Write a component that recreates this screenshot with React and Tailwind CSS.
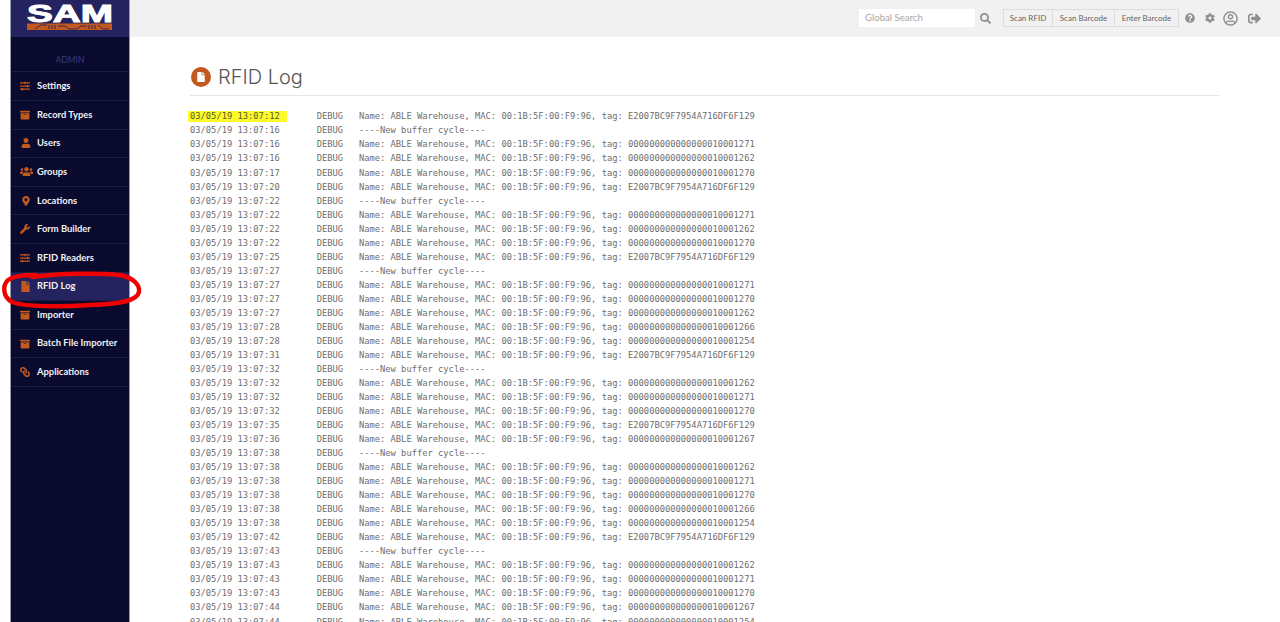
import React from "react";
import { FaSlidersH, FaArchive, FaUser, FaUsers, FaMapMarkerAlt, FaWrench, FaFile, FaLink, FaQuestionCircle, FaCog, FaSearch, FaRegUserCircle, FaSignOutAlt } from "react-icons/fa";

const nav = [
  ["Settings", FaSlidersH, "text-[10px]"],
  ["Record Types", FaArchive, "text-[10px]"],
  ["Users", FaUser, "text-[10px] ml-[1px]"],
  ["Groups", FaUsers, "text-[13px]"],
  ["Locations", FaMapMarkerAlt, "text-[10px] ml-[1px]"],
  ["Form Builder", FaWrench, "text-[10px]"],
  ["RFID Readers", FaSlidersH, "text-[10px]"],
  ["RFID Log", FaFile, "text-[11px]"],
  ["Importer", FaArchive, "text-[10px]"],
  ["Batch File Importer", FaArchive, "text-[10px]"],
  ["Applications", FaLink, "text-[10px] -scale-x-100"],
];

const z = "0000000000000000";
const rows = [
  ["12", "E2007BC9F7954A716DF6F129"], ["16", null], ["16", z + "10001271"], ["16", z + "10001262"], ["17", z + "10001270"], ["20", "E2007BC9F7954A716DF6F129"],
  ["22", null], ["22", z + "10001271"], ["22", z + "10001262"], ["22", z + "10001270"], ["25", "E2007BC9F7954A716DF6F129"],
  ["27", null], ["27", z + "10001271"], ["27", z + "10001270"], ["27", z + "10001262"], ["28", z + "10001266"], ["28", z + "10001254"], ["31", "E2007BC9F7954A716DF6F129"],
  ["32", null], ["32", z + "10001262"], ["32", z + "10001271"], ["32", z + "10001270"], ["35", "E2007BC9F7954A716DF6F129"], ["36", z + "10001267"],
  ["38", null], ["38", z + "10001262"], ["38", z + "10001271"], ["38", z + "10001270"], ["38", z + "10001266"], ["38", z + "10001254"], ["42", "E2007BC9F7954A716DF6F129"],
  ["43", null], ["43", z + "10001262"], ["43", z + "10001271"], ["43", z + "10001270"], ["44", z + "10001267"], ["44", z + "10001254"],
];

function Logo() {
  return (
    <svg width="86" height="28" viewBox="0 0 86 28" className="block overflow-visible">
      <text x="0" y="17.5" textLength="86" lengthAdjust="spacingAndGlyphs" fill="#ffffff" stroke="#ffffff" strokeWidth="0.9" fontFamily="'Liberation Sans', sans-serif" fontWeight="700" fontSize="23">SAM</text>
      <rect x="0" y="19.5" width="85" height="6.5" fill="#c4591f" />
      <path d="M8 25 L14 21 H20 M22 25 V21 M25 25 V21 M28 25 V21 M31 22 H38 L42 25 H50 L54 22 H60 M62 25 V21 M65 25 V21 M68 25 V21 M71 21 L76 25 H82" stroke="#25235f" strokeWidth="0.9" fill="none" />
    </svg>
  );
}

export default function App() {
  return (
    <div className="flex h-screen overflow-hidden bg-white font-['Lato',sans-serif]">
      <div className="w-[10px] shrink-0 bg-white" />
      <aside className="w-[120px] shrink-0 border-x border-[#9a9aa2] bg-[#0a0a2e]">
        <div className="flex h-[37px] items-start justify-center bg-[#25235f] pt-[4px]">
          <Logo />
        </div>
        <div className="pt-[18px] pb-[6.4px] text-center text-[8.5px] leading-[10px] text-[#3d3b70]">ADMIN</div>
        <nav className="border-t border-[#1c1b47]">
          {nav.map(([label, Icon, size]) => {
            const active = label === "RFID Log";
            return (
              <div key={label} className={`flex h-[28.6px] items-center border-b border-[#1c1b47] pl-[9px] ${active ? "bg-[#25235f]" : ""}`}>
                <span className="flex w-[17px] shrink-0 justify-start">
                  <Icon className={`${size} text-[#c4591f]`} />
                </span>
                <span className="text-[9.4px] font-bold text-[#f0f0f4]">{label}</span>
              </div>
            );
          })}
        </nav>
      </aside>
      <div className="min-w-0 flex-1">
        <header className="flex h-[37px] items-center bg-[#f1f1f1] pb-[1px] pl-[729px]">
          <div className="flex h-[18px] w-[116px] items-center bg-white pl-[6px] text-[9.6px] text-[#a8a8a8]">Global Search</div>
          <FaSearch className="ml-[5px] text-[11px] text-[#8f8f8f]" />
          <div className="ml-[12px] flex h-[18px] divide-x divide-[#dcdcdc] border border-[#dcdcdc] bg-[#f1f1f1] text-[8px] text-[#666]">
            <span className="flex w-[49px] items-center justify-center">Scan RFID</span>
            <span className="flex w-[62px] items-center justify-center">Scan Barcode</span>
            <span className="flex w-[63px] items-center justify-center">Enter Barcode</span>
          </div>
          <FaQuestionCircle className="ml-[6px] text-[10px] text-[#8f8f8f]" />
          <FaCog className="ml-[10px] text-[10px] text-[#8f8f8f]" />
          <FaRegUserCircle className="ml-[8px] text-[15px] text-[#8f8f8f]" />
          <FaSignOutAlt className="ml-[10px] text-[13px] text-[#8f8f8f]" />
        </header>
        <main className="ml-[60px] mr-[60px]">
          <div className="mt-[27px] box-content flex h-[26px] items-center gap-[7px] border-b border-[#e6e6e6] pb-[5px]">
            <span className="ml-[1px] flex h-[20px] w-[20px] items-center justify-center rounded-full bg-[#c4591f]">
              <FaFile className="text-[10px] text-white" />
            </span>
            <h1 className="font-['Inter',sans-serif] text-[20px] font-light leading-none text-[#555]">RFID Log</h1>
          </div>
          <pre className="mt-[13.4px] font-['DejaVu_Sans_Mono',monospace] text-[8.77px] leading-[14.03px] text-[#6e6e6e]">
            {rows.map(([sec, tag], i) => (
              <div key={i}>
                <span className={i === 0 ? "-ml-[2px] bg-[#fbfb2c] pl-[2px] pr-[7px] pb-[1px] text-[#5a5a20]" : ""}>{`03/05/19 13:07:${sec}`}</span>
                <span className={i === 0 ? "-ml-[7px]" : ""}>{"       DEBUG   "}</span>
                {tag ? `Name: ABLE Warehouse, MAC: 00:1B:5F:00:F9:96, tag: ${tag}` : "----New buffer cycle----"}
              </div>
            ))}
          </pre>
        </main>
      </div>
      <svg className="pointer-events-none absolute left-0 top-[268px]" width="146" height="46" viewBox="0 0 146 46" fill="none">
        <path d="M32 9 C60 5 100 5 120 7 C134 10 140 17 139 24 C137 33 120 36 90 37 C60 39 25 39 12 34 C3 29 2 18 8 12 C16 7 26 7 36 7" stroke="#f00000" strokeWidth="4.4" strokeLinecap="round" />
      </svg>
    </div>
  );
}
